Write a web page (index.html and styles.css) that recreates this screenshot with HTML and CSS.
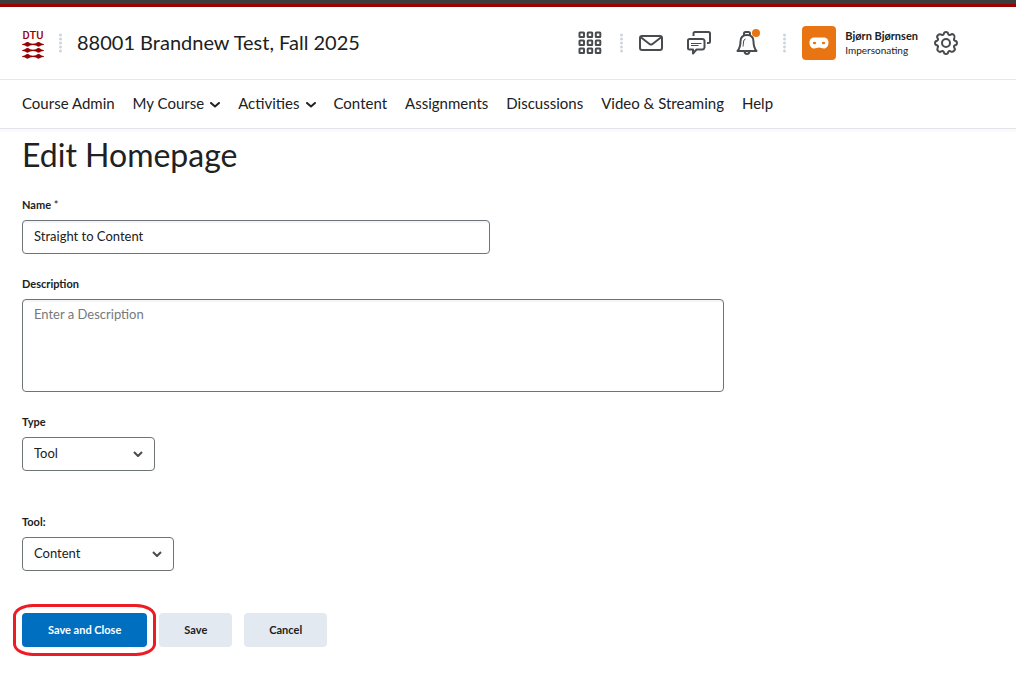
FILE: index.html
```html
<!DOCTYPE html>
<html lang="en">
<head>
    <meta charset="UTF-8">
    <meta name="viewport" content="width=device-width, initial-scale=1.0">
    <title>Edit Homepage - 88001 Brandnew Test, Fall 2025</title>
    <link rel="stylesheet" href="styles.css">
</head>
<body>
    <header class="header">
        <a class="logo" href="#" aria-label="DTU home">
            <svg width="22" height="34" viewBox="0 0 22 34">
                <text class="logo-text" x="11" y="13" text-anchor="middle">DTU</text>
                <g id="logo-bar" fill="#990000">
                    <path d="M0 18.2L3 17.2Q5.500 15 8 17.200L11 17.700L14 17.200Q16.500 15 19 17.200L22 18.200V18.800L19 19.600Q16.500 21.800 14 19.600L11 19.100L8 19.600Q5.500 21.800 3 19.600L0 18.800Z"/>
                </g>
                <use href="#logo-bar" y="6"/>
                <use href="#logo-bar" y="12"/>
            </svg>
        </a>
        <svg class="dots" width="3" height="20" viewBox="0 0 3 20"><path d="M1.500 2v17"/></svg>
        <a class="course-title" href="#">88001 Brandnew Test, Fall 2025</a>

        <div class="tools">
            <button class="icon-btn" type="button" aria-label="Course selector">
                <svg width="24" height="24" viewBox="0 0 24 24">
                    <g id="grid-row">
                        <rect x="1.500" y="1.500" width="4.500" height="4.500" rx=".5"/>
                        <rect x="9.700" y="1.500" width="4.500" height="4.500" rx=".5"/>
                        <rect x="17.800" y="1.500" width="4.500" height="4.500" rx=".5"/>
                    </g>
                    <use href="#grid-row" y="8"/>
                    <use href="#grid-row" y="16"/>
                </svg>
            </button>
            <svg class="dots dots-apps" width="3" height="20" viewBox="0 0 3 20"><path d="M1.500 2v17"/></svg>
            <div class="alerts">
                <button class="icon-btn" type="button" aria-label="Messages">
                    <svg width="24" height="24" viewBox="0 0 24 24">
                        <rect x="1" y="5" width="22" height="14" rx="2"/>
                        <path d="M1.500 6L10.800 13.200Q12 14 13.200 13.200L22.500 6"/>
                    </svg>
                </button>
                <button class="icon-btn" type="button" aria-label="Subscriptions">
                    <svg width="24" height="24" viewBox="0 0 24 24">
                        <path d="M6.500 5V2.500Q6.500 1 8 1H21.500Q23 1 23 2.500V10.500Q23 12 21.500 12H20"/>
                        <path d="M2.500 8H15.500Q17 8 17.500 9.500V16.500Q17 18.500 15.500 18.500H9.500L6 22.500V18.500H2.500Q1 18.500 1 17V9.500Q1 8 2.500 8Z"/>
                        <path class="thin" d="M4 12.500h10.500M4 14.500h7.500"/>
                    </svg>
                </button>
                <button class="icon-btn" type="button" aria-label="Notifications">
                    <svg width="24" height="24" viewBox="0 0 24 24">
                        <path d="M9 4V2.500Q9 1 10.500 1H13.500Q15 1 15 2.500V4"/>
                        <path d="M12 4C7.500 4 5.500 7 5.500 10.500C5.500 15 5 17 2.500 20H21.500C19 17 18.500 15 18.500 10.500C18.500 7 16.500 4 12 4Z"/>
                        <path d="M9.500 20.500Q10 23 12 23T14.500 20.500"/>
                        <path class="thin" d="M10.500 8Q8.500 8.500 8.500 11T8 15.500"/>
                    </svg>
                    <span class="badge"></span>
                </button>
            </div>
            <svg class="dots dots-user" width="3" height="20" viewBox="0 0 3 20"><path d="M1.500 2v17"/></svg>
            <button class="user" type="button">
                <span class="avatar">
                    <svg width="20" height="12" viewBox="0 0 20 12">
                        <path fill="#fff" d="M5 .5H15C18 .5 19.500 3 19.500 5.500C19.500 9 17.500 11.500 15 11.500C12.500 11.500 12 10.500 10 10.500S7.500 11.500 5 11.500C2.500 11.500 .5 9 .5 5.500C.5 3 2 .5 5 .5Z"/>
                        <ellipse cx="5.500" cy="6" rx="1.700" ry="1.300" fill="#e87511"/>
                        <ellipse cx="14.500" cy="6" rx="1.700" ry="1.300" fill="#e87511"/>
                    </svg>
                </span>
                <span class="user-text">
                    <span class="user-name">Bjørn Bjørnsen</span>
                    <span class="user-role">Impersonating</span>
                </span>
            </button>
            <button class="icon-btn" type="button" aria-label="Admin tools">
                <svg width="24" height="24" viewBox="0 0 24 24">
                    <path d="M9.700 3.200Q10 1 12 1T14.300 3.200Q15.200 4.600 16.600 3.700Q18.300 2.400 19.800 3.900T20.300 7.400Q19.400 8.800 20.800 9.700Q23 10 23 12T20.800 14.300Q19.400 15.200 20.300 16.600Q21.600 18.300 20.100 19.800T16.600 20.300Q15.200 19.400 14.300 20.800Q14 23 12 23T9.700 20.800Q8.800 19.400 7.400 20.300Q5.700 21.600 4.200 20.100T3.700 16.600Q4.600 15.200 3.200 14.300Q1 14 1 12T3.200 9.700Q4.600 8.800 3.700 7.400Q2.400 5.700 3.900 4.200T7.400 3.700Q8.800 4.600 9.700 3.200Z"/>
                    <circle cx="12" cy="12" r="4"/>
                </svg>
            </button>
        </div>
    </header>

    <nav class="navbar">
        <a href="#">Course Admin</a>
        <a href="#">My Course
            <svg width="10" height="6" viewBox="0 0 10 6"><path d="M1 1l4 3.500 4-3.500"/></svg>
        </a>
        <a href="#">Activities
            <svg width="10" height="6" viewBox="0 0 10 6"><path d="M1 1l4 3.500 4-3.500"/></svg>
        </a>
        <a href="#">Content</a>
        <a href="#">Assignments</a>
        <a href="#">Discussions</a>
        <a href="#">Video &amp; Streaming</a>
        <a href="#">Help</a>
    </nav>

    <main class="page">
        <h1>Edit Homepage</h1>
        <form>
            <div class="field">
                <label for="name">Name <span class="required">*</span></label>
                <input class="control name-input" type="text" id="name" value="Straight to Content">
            </div>
            <div class="field">
                <label for="description">Description</label>
                <textarea class="control description-input" id="description" placeholder="Enter a Description"></textarea>
            </div>
            <div class="field field-spaced">
                <label for="type">Type</label>
                <div class="select-wrap type-select">
                    <select class="control" id="type">
                        <option>Tool</option>
                    </select>
                    <svg width="10" height="6" viewBox="0 0 10 6"><path d="M1 1l4 4 4-4"/></svg>
                </div>
            </div>
            <div class="field field-spaced">
                <label for="tool">Tool:</label>
                <div class="select-wrap tool-select">
                    <select class="control" id="tool">
                        <option>Content</option>
                    </select>
                    <svg width="10" height="6" viewBox="0 0 10 6"><path d="M1 1l4 4 4-4"/></svg>
                </div>
            </div>
            <div class="buttons">
                <div class="highlight">
                    <button class="btn btn-primary" type="submit">Save and Close</button>
                </div>
                <button class="btn" type="button">Save</button>
                <button class="btn" type="button">Cancel</button>
            </div>
        </form>
    </main>
</body>
</html>
```
FILE: styles.css
```css
* {
    box-sizing: border-box;
}
body {
    margin: 0;
    font-family: Lato, sans-serif;
    font-size: 13px;
    color: #202122;
    background: #fff;
    border-top: 4px solid #3c3c3c;
}
a {
    color: inherit;
    text-decoration: none;
}
button, input, select, textarea {
    font-family: inherit;
    color: inherit;
}
svg {
    display: block;
    fill: none;
}

/* Header */
.header {
    display: flex;
    align-items: center;
    height: 76px;
    padding: 0 58px 0 22px;
    border-top: 3px solid #990000;
    border-bottom: 1px solid #e6e7e9;
}
.logo-text {
    font-family: Roboto, sans-serif;
    font-size: 11px;
    font-weight: 500;
    fill: #990000;
}
.dots {
    stroke: #cdd5dc;
    stroke-width: 3;
    stroke-linecap: round;
    stroke-dasharray: 0 4;
}
.logo + .dots {
    margin: 0 15px;
}
.course-title {
    padding-bottom: 3px;
    font-size: 20px;
}
.tools {
    display: flex;
    align-items: center;
    gap: 16px;
    margin-left: auto;
}
.alerts {
    display: flex;
    gap: 24px;
}
.icon-btn {
    position: relative;
    padding: 0;
    border: 0;
    background: none;
}
.icon-btn svg {
    stroke: #494c4e;
    stroke-width: 2;
    stroke-linejoin: round;
}
.icon-btn .thin {
    stroke-width: 1;
}
.badge {
    position: absolute;
    top: -2px;
    right: -1px;
    width: 8px;
    height: 8px;
    border-radius: 50%;
    background: #e87511;
}
.dots-apps {
    margin-left: 2px;
}
.dots-user {
    margin-left: 8px;
}
.user {
    display: flex;
    align-items: center;
    gap: 9px;
    padding: 0;
    border: 0;
    background: none;
    text-align: left;
}
.avatar {
    display: flex;
    align-items: center;
    justify-content: center;
    width: 34px;
    height: 34px;
    border-radius: 4px;
    background: #e87511;
}
.user-text {
    display: flex;
    flex-direction: column;
    line-height: 15px;
}
.user-name {
    font-size: 11px;
    font-weight: bold;
}
.user-role {
    font-size: 10px;
}

/* Navigation */
.navbar {
    display: flex;
    align-items: center;
    gap: 18px;
    height: 49px;
    padding: 0 22px 2px;
    font-size: 15px;
    border-bottom: 1px solid #e3e5ea;
    box-shadow: 0 3px 0 #fafafa;
}
.navbar a {
    display: flex;
    align-items: center;
    gap: 6px;
}
.navbar svg {
    margin-top: 3px;
    stroke: #202122;
    stroke-width: 2;
    stroke-linecap: round;
    stroke-linejoin: round;
}

/* Form */
.page {
    padding: 6px 22px 24px;
}
h1 {
    margin: 0 0 21px;
    font-size: 32px;
    font-weight: normal;
    line-height: 40px;
}
.field {
    margin-bottom: 21px;
}
.field-spaced {
    margin-bottom: 42px;
}
label {
    display: block;
    margin-bottom: 6px;
    font-size: 11px;
    font-weight: bold;
    line-height: 18px;
}
.required {
    font-weight: normal;
}
.control {
    display: block;
    width: 100%;
    height: 34px;
    padding: 0 11px 3px;
    font-size: 13px;
    background: #fff;
    border: 1px solid #6e7376;
    border-radius: 4px;
}
input.control, textarea.control {
    box-shadow: inset 0 2px 0 #f4f5f8;
}
.name-input {
    max-width: 468px;
}
.description-input {
    max-width: 702px;
    height: 93px;
    padding: 5px 11px;
    line-height: 18px;
    resize: none;
}
.description-input::placeholder {
    color: #76797c;
}
.select-wrap {
    position: relative;
}
.select-wrap select {
    appearance: none;
}
.select-wrap svg {
    position: absolute;
    top: 14px;
    right: 12px;
    stroke: #494c4e;
    stroke-width: 2;
    stroke-linejoin: round;
    pointer-events: none;
}
.type-select {
    max-width: 133px;
}
.tool-select {
    max-width: 152px;
}
.buttons {
    display: flex;
    gap: 12px;
}
.btn {
    height: 34px;
    padding: 0 25px 1px;
    font-size: 11px;
    font-weight: bold;
    background: #e3e9f1;
    border: 0;
    border-radius: 4px;
}
.btn-primary {
    padding: 0 26px 1px;
    color: #fff;
    background: #006fbf;
}
.highlight {
    position: relative;
}
.highlight::after {
    content: "";
    position: absolute;
    inset: -9px;
    border: 3px solid #ed1c24;
    border-radius: 20px / 12px;
    pointer-events: none;
}
```
